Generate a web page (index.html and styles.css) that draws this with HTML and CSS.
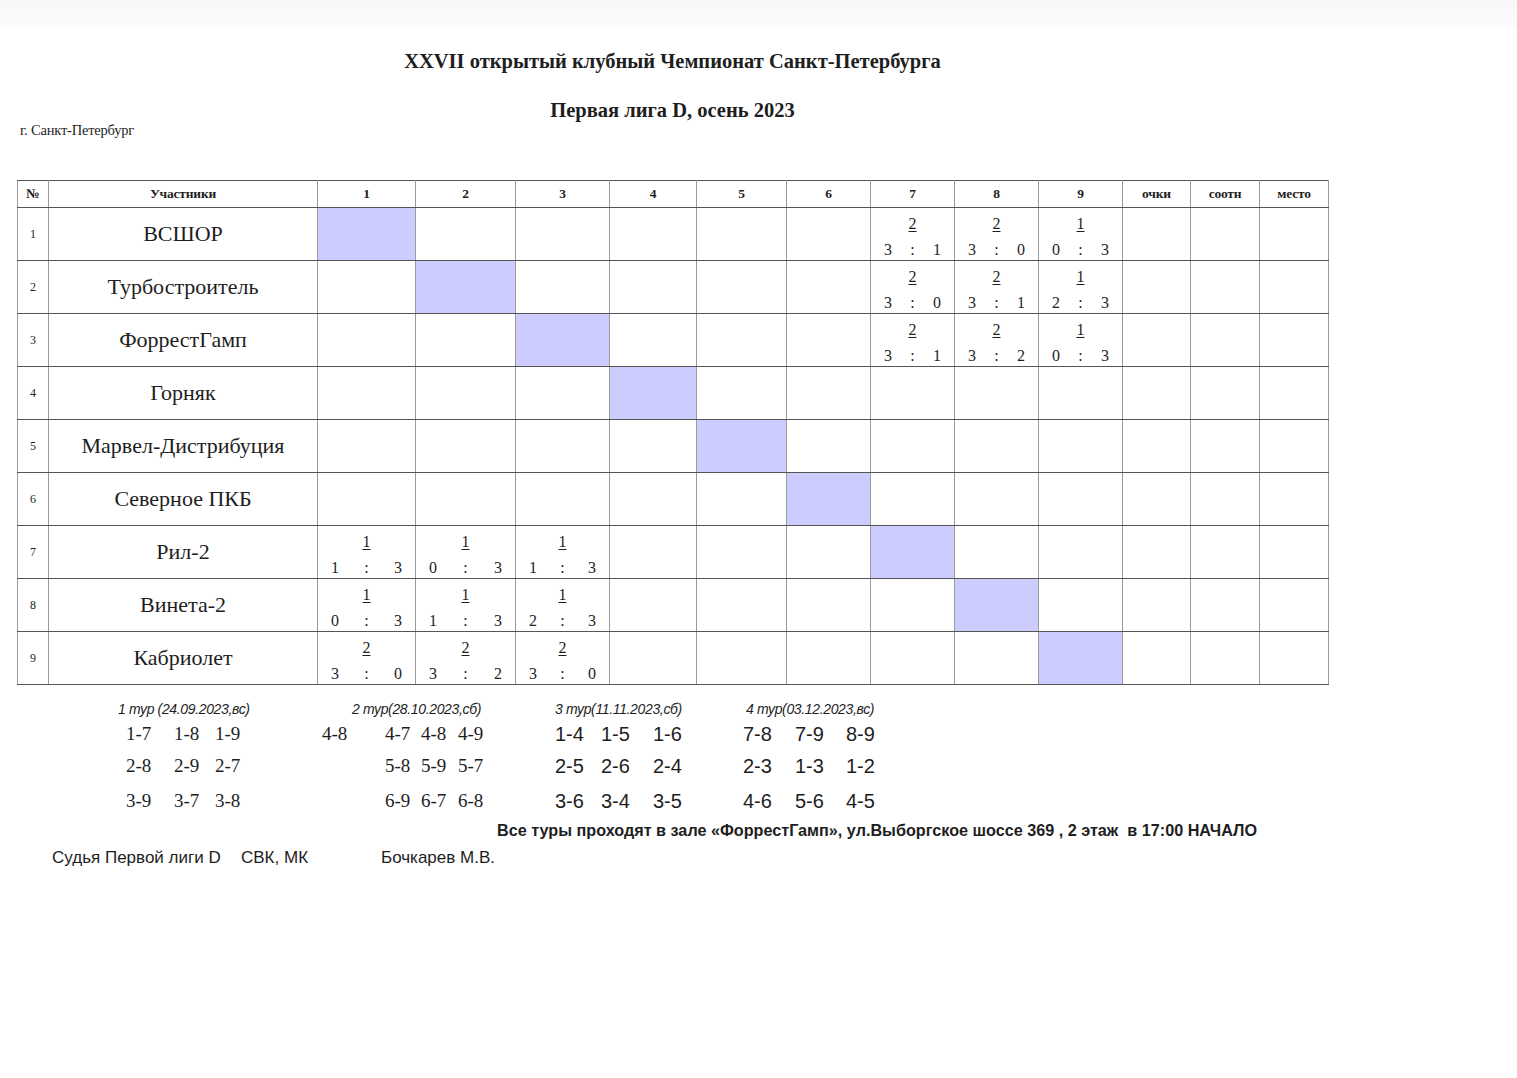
FILE: index.html
```html
<!DOCTYPE html>
<html lang="ru">
<head>
<meta charset="utf-8">
<title>Первая лига D, осень 2023</title>
<link rel="stylesheet" href="styles.css">
</head>
<body>
<div class="topbar"></div>
<div class="sheet">
  <h1 class="title">XXVII открытый клубный Чемпионат Санкт-Петербурга</h1>
  <h2 class="subtitle">Первая лига D, осень 2023</h2>
  <div class="city">г. Санкт-Петербург</div>

  <table class="grid">
    <colgroup>
      <col class="c-no"><col class="c-name">
      <col class="c1"><col class="c2"><col class="c3"><col class="c4"><col class="c5"><col class="c6"><col class="c7"><col class="c8"><col class="c9">
      <col class="c-pts"><col class="c-rat"><col class="c-pl">
    </colgroup>
    <thead>
      <tr>
        <th>№</th><th>Участники</th>
        <th>1</th><th>2</th><th>3</th><th>4</th><th>5</th><th>6</th><th>7</th><th>8</th><th>9</th>
        <th>очки</th><th>соотн</th><th>место</th>
      </tr>
    </thead>
    <tbody>
      <tr>
        <td class="no">1</td><td class="name">ВСШОР</td>
        <td class="self"></td><td></td><td></td><td></td><td></td><td></td>
        <td class="score"><div class="pts">2</div><div class="sets"><span>3</span><span>:</span><span>1</span></div></td>
        <td class="score"><div class="pts">2</div><div class="sets"><span>3</span><span>:</span><span>0</span></div></td>
        <td class="score"><div class="pts">1</div><div class="sets"><span>0</span><span>:</span><span>3</span></div></td>
        <td></td><td></td><td></td>
      </tr>
      <tr>
        <td class="no">2</td><td class="name">Турбостроитель</td>
        <td></td><td class="self"></td><td></td><td></td><td></td><td></td>
        <td class="score"><div class="pts">2</div><div class="sets"><span>3</span><span>:</span><span>0</span></div></td>
        <td class="score"><div class="pts">2</div><div class="sets"><span>3</span><span>:</span><span>1</span></div></td>
        <td class="score"><div class="pts">1</div><div class="sets"><span>2</span><span>:</span><span>3</span></div></td>
        <td></td><td></td><td></td>
      </tr>
      <tr>
        <td class="no">3</td><td class="name">ФоррестГамп</td>
        <td></td><td></td><td class="self"></td><td></td><td></td><td></td>
        <td class="score"><div class="pts">2</div><div class="sets"><span>3</span><span>:</span><span>1</span></div></td>
        <td class="score"><div class="pts">2</div><div class="sets"><span>3</span><span>:</span><span>2</span></div></td>
        <td class="score"><div class="pts">1</div><div class="sets"><span>0</span><span>:</span><span>3</span></div></td>
        <td></td><td></td><td></td>
      </tr>
      <tr>
        <td class="no">4</td><td class="name">Горняк</td>
        <td></td><td></td><td></td><td class="self"></td><td></td><td></td><td></td><td></td><td></td>
        <td></td><td></td><td></td>
      </tr>
      <tr>
        <td class="no">5</td><td class="name">Марвел-Дистрибуция</td>
        <td></td><td></td><td></td><td></td><td class="self"></td><td></td><td></td><td></td><td></td>
        <td></td><td></td><td></td>
      </tr>
      <tr>
        <td class="no">6</td><td class="name">Северное ПКБ</td>
        <td></td><td></td><td></td><td></td><td></td><td class="self"></td><td></td><td></td><td></td>
        <td></td><td></td><td></td>
      </tr>
      <tr>
        <td class="no">7</td><td class="name">Рил-2</td>
        <td class="score"><div class="pts">1</div><div class="sets"><span>1</span><span>:</span><span>3</span></div></td>
        <td class="score"><div class="pts">1</div><div class="sets"><span>0</span><span>:</span><span>3</span></div></td>
        <td class="score"><div class="pts">1</div><div class="sets"><span>1</span><span>:</span><span>3</span></div></td>
        <td></td><td></td><td></td><td class="self"></td><td></td><td></td>
        <td></td><td></td><td></td>
      </tr>
      <tr>
        <td class="no">8</td><td class="name">Винета-2</td>
        <td class="score"><div class="pts">1</div><div class="sets"><span>0</span><span>:</span><span>3</span></div></td>
        <td class="score"><div class="pts">1</div><div class="sets"><span>1</span><span>:</span><span>3</span></div></td>
        <td class="score"><div class="pts">1</div><div class="sets"><span>2</span><span>:</span><span>3</span></div></td>
        <td></td><td></td><td></td><td></td><td class="self"></td><td></td>
        <td></td><td></td><td></td>
      </tr>
      <tr>
        <td class="no">9</td><td class="name">Кабриолет</td>
        <td class="score"><div class="pts">2</div><div class="sets"><span>3</span><span>:</span><span>0</span></div></td>
        <td class="score"><div class="pts">2</div><div class="sets"><span>3</span><span>:</span><span>2</span></div></td>
        <td class="score"><div class="pts">2</div><div class="sets"><span>3</span><span>:</span><span>0</span></div></td>
        <td></td><td></td><td></td><td></td><td></td><td class="self"></td>
        <td></td><td></td><td></td>
      </tr>
    </tbody>
  </table>
</div>

<div class="schedule">
  <div class="tour t1">
    <div class="tour-head">1 тур (24.09.2023,вс)</div>
    <div class="pairs r1"><span>1-7</span><span>1-8</span><span>1-9</span></div>
    <div class="pairs r2"><span>2-8</span><span>2-9</span><span>2-7</span></div>
    <div class="pairs r3"><span>3-9</span><span>3-7</span><span>3-8</span></div>
  </div>
  <div class="tour t2">
    <div class="tour-head">2 тур(28.10.2023,сб)</div>
    <div class="pairs r1"><span>4-8</span><span>4-7</span><span>4-8</span><span>4-9</span></div>
    <div class="pairs r2"><span></span><span>5-8</span><span>5-9</span><span>5-7</span></div>
    <div class="pairs r3"><span></span><span>6-9</span><span>6-7</span><span>6-8</span></div>
  </div>
  <div class="tour t3">
    <div class="tour-head">3 тур(11.11.2023,сб)</div>
    <div class="pairs r1"><span>1-4</span><span>1-5</span><span>1-6</span></div>
    <div class="pairs r2"><span>2-5</span><span>2-6</span><span>2-4</span></div>
    <div class="pairs r3"><span>3-6</span><span>3-4</span><span>3-5</span></div>
  </div>
  <div class="tour t4">
    <div class="tour-head">4 тур(03.12.2023,вс)</div>
    <div class="pairs r1"><span>7-8</span><span>7-9</span><span>8-9</span></div>
    <div class="pairs r2"><span>2-3</span><span>1-3</span><span>1-2</span></div>
    <div class="pairs r3"><span>4-6</span><span>5-6</span><span>4-5</span></div>
  </div>
</div>

<div class="venue">Все туры проходят в зале «ФоррестГамп», ул.Выборгское шоссе 369 , 2 этаж &nbsp;в 17:00 НАЧАЛО</div>

<div class="judge">
  <span class="j-role">Судья Первой лиги D</span>
  <span class="j-cat">СВК, МК</span>
  <span class="j-name">Бочкарев М.В.</span>
</div>
</body>
</html>
```

FILE: styles.css
```css
html, body {
  margin: 0;
  padding: 0;
  background: #ffffff;
  color: #1e1e1e;
  font-family: "Liberation Serif", "Times New Roman", serif;
}

.topbar {
  height: 30px;
  background: linear-gradient(#f8f8f8, #fbfbfb 80%, #ffffff);
}

.sheet {
  margin-left: 17px;
  width: 1311px;
}

.title {
  margin: 19px 0 0;
  font-size: 20.5px;
  line-height: 24px;
  font-weight: bold;
  text-align: center;
}

.subtitle {
  margin: 25px 0 0;
  font-size: 20.5px;
  line-height: 24px;
  font-weight: bold;
  text-align: center;
}

.city {
  margin: 1px 0 0 3px;
  font-size: 14.5px;
  line-height: 14px;
  letter-spacing: -0.2px;
}

.grid {
  margin-top: 43px;
  border-collapse: collapse;
  table-layout: fixed;
  width: 1311px;
}

.c-no { width: 31px; }
.c-name { width: 269px; }
.c1 { width: 98px; }
.c2 { width: 100px; }
.c3 { width: 94px; }
.c4 { width: 87px; }
.c5 { width: 90px; }
.c6 { width: 84px; }
.c7, .c8, .c9 { width: 84px; }
.c-pts { width: 68px; }
.c-rat, .c-pl { width: 69px; }

.grid th,
.grid td {
  border-top: 1px solid #555555;
  border-bottom: 1px solid #555555;
  border-left: 1px solid #9a9a9a;
  border-right: 1px solid #9a9a9a;
  padding: 0;
  text-align: center;
  vertical-align: middle;
}

.grid th {
  height: 26px;
  font-size: 13.5px;
  font-weight: bold;
  letter-spacing: -0.2px;
}

.grid td {
  height: 52px;
}

.grid td.no {
  font-size: 12px;
}

.grid td.name {
  font-size: 22px;
}

.grid td.self {
  background: #ccccff;
}

.score .pts {
  font-size: 16px;
  line-height: 18px;
  text-decoration: underline;
  text-underline-offset: 2px;
  margin-top: 5px;
}

.score .sets {
  display: grid;
  grid-template-columns: 1fr 1fr 1fr;
  padding: 0 13px;
  margin-top: 8px;
  font-size: 16px;
  line-height: 18px;
}

.score .sets span:first-child { text-align: left; }
.score .sets span:nth-child(2) { text-align: center; }
.score .sets span:last-child { text-align: right; }

/* schedule */
.schedule {
  display: flex;
  margin-top: 14px;
}

.tour-head {
  font-family: "Liberation Sans", Arial, sans-serif;
  font-style: italic;
  font-size: 14px;
  line-height: 20px;
  letter-spacing: -0.35px;
  white-space: nowrap;
}

.pairs {
  display: grid;
  line-height: 24px;
  font-size: 19px;
  white-space: nowrap;
}

.pairs.r1 { margin-top: 3px; }
.pairs.r2 { margin-top: 8px; }
.pairs.r3 { margin-top: 11px; }

.t1 {
  margin-left: 118px;
  width: 182px;
}
.t1 .pairs {
  padding-left: 8px;
  grid-template-columns: 48px 41px 40px;
}

.t2 {
  width: 240px;
}
.t2 .tour-head { padding-left: 52px; }
.t2 .pairs {
  padding-left: 22px;
  grid-template-columns: 63px 36px 37px 40px;
}

.t3 {
  width: 200px;
}
.t3 .tour-head { padding-left: 15px; }
.t3 .pairs {
  padding-left: 15px;
  grid-template-columns: 46px 52px 40px;
  font-family: "Liberation Sans", Arial, sans-serif;
  font-size: 20px;
}

.t4 .tour-head { padding-left: 6px; }
.t4 .pairs {
  padding-left: 3px;
  grid-template-columns: 52px 51px 40px;
  font-family: "Liberation Sans", Arial, sans-serif;
  font-size: 20px;
}

.venue {
  margin: 7px 0 0 497px;
  font-family: "Liberation Sans", Arial, sans-serif;
  font-weight: bold;
  font-size: 16.2px;
  line-height: 20px;
  white-space: nowrap;
}

.judge {
  display: flex;
  margin: 8px 0 0 52px;
  font-family: "Liberation Sans", Arial, sans-serif;
  font-size: 17px;
  line-height: 20px;
  white-space: nowrap;
}

.j-role { width: 189px; }
.j-cat { width: 140px; }
```
